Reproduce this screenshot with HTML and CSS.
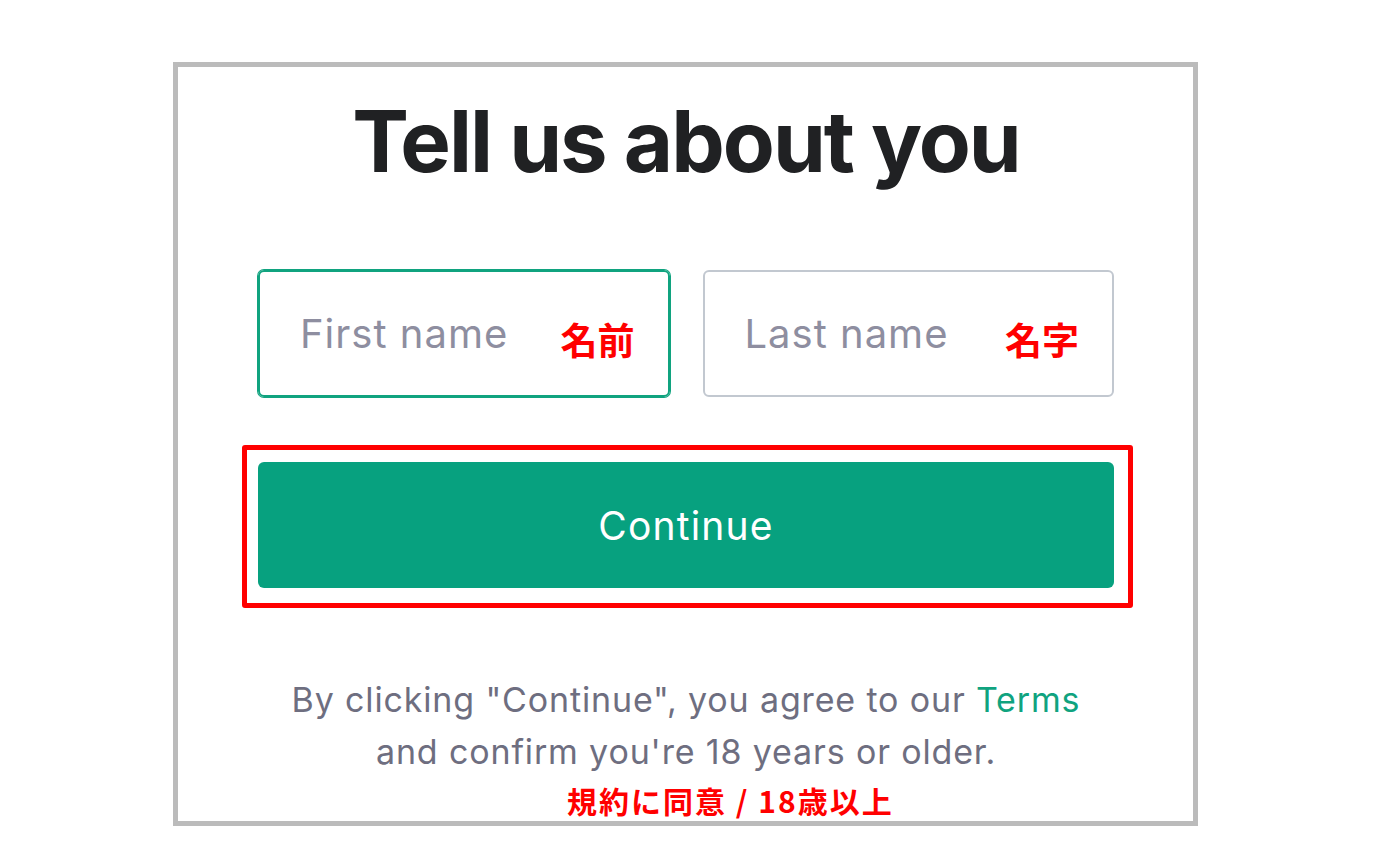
FILE: index.html
```html
<!DOCTYPE html>
<html lang="en">
<head>
  <meta charset="UTF-8"/>
  <meta name="viewport" content="width=device-width, initial-scale=1.0"/>
  <title>Tell us about you</title>
  <link rel="stylesheet" href="styles.css">
</head>
<body>
  <div class="frame">
    <h1>Tell us about you</h1>
    <div class="names">
      <div class="field focused">
        <span class="placeholder">First name</span>
        <span class="note">名前</span>
      </div>
      <div class="field">
        <span class="placeholder">Last name</span>
        <span class="note">名字</span>
      </div>
    </div>
    <div class="highlight">
      <button class="continue">Continue</button>
    </div>
    <p class="terms">By clicking "Continue", you agree to our <a href="#">Terms</a><br>and confirm you're 18 years or older.</p>
    <p class="terms-note">規約に同意 / 18歳以上</p>
  </div>
</body>
</html>
```

FILE: styles.css
```css
body { margin: 0; background-color: #fff; font-family: Inter, "Noto Sans", sans-serif; }
.frame { box-sizing: border-box; width: 1025px; height: 764px; margin: 62px 0 0 173px; border: 5px solid #bbbbbb; padding: 0 79px 0 80px; }
h1 { margin: 32px 0 0; font-size: 85px; line-height: 85px; font-weight: 700; color: #202123; text-align: center; letter-spacing: -2px; }
.names { display: flex; gap: 33px; margin-top: 86px; }
.field { flex: 1; box-sizing: border-box; height: 127px; border: 2px solid #c2c8d0; border-radius: 6px; display: flex; align-items: center; justify-content: space-between; padding: 0 33px 0 40px; }
.field.focused { border-color: #10a37f; box-shadow: 0 0 0 1px #10a37f; }
.placeholder { font-size: 40px; letter-spacing: 1px; color: #8e8ea0; }
.note { margin-top: 10px; font-family: "Noto Sans CJK JP", sans-serif; font-weight: 700; font-size: 37px; color: #ff0000; }
.highlight { margin: 48px -19px 0 -16px; border: 5px solid #ff0000; border-radius: 3px; padding: 12px 14px 15px 11px; }
.continue { display: block; width: 100%; height: 126px; border: none; border-radius: 6px; background-color: #07a17f; color: #fff; font-family: Inter, sans-serif; font-size: 39px; letter-spacing: 1.2px; cursor: pointer; }
.terms { margin: 66px 0 0; font-size: 34px; line-height: 52px; letter-spacing: 0.85px; color: #6e6e80; text-align: center; }
.terms a { color: #10a37f; text-decoration: none; }
.terms-note { margin: 7px 0 0 309px; font-family: "Noto Sans CJK JP", sans-serif; font-weight: 700; font-size: 30px; line-height: 30px; letter-spacing: 2px; color: #ff0000; }
```
